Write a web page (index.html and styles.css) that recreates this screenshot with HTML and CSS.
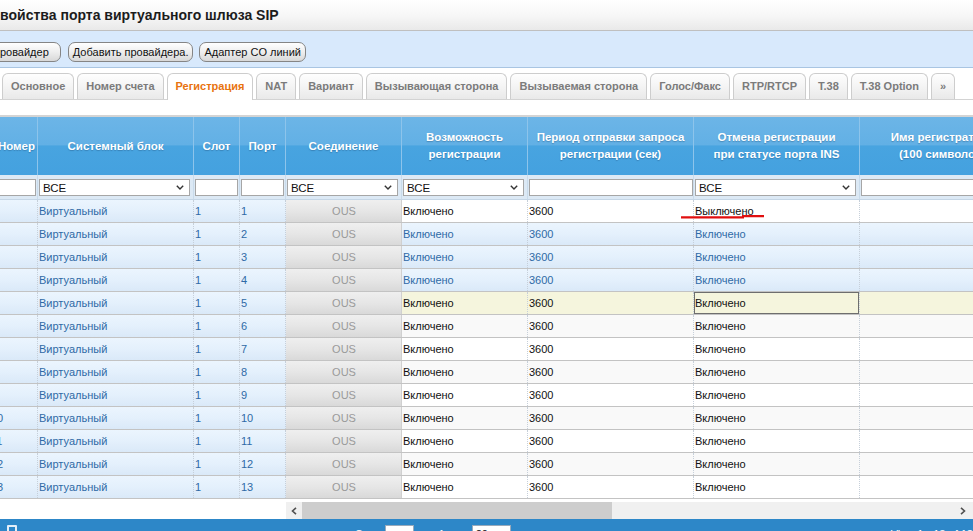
FILE: index.html
```html
<!DOCTYPE html>
<html lang="ru">
<head>
<meta charset="utf-8">
<title>Свойства порта виртуального шлюза SIP</title>
<link rel="stylesheet" href="styles.css">
</head>
<body>
<div class="titlebar"><h1>Свойства порта виртуального шлюза SIP</h1></div>
<div class="toolbar">
  <button class="btn btn-first">Провайдер</button>
  <button class="btn">Добавить провайдера.</button>
  <button class="btn">Адаптер CO линий</button>
</div>
<div class="tabs">
  <div class="tab">Основное</div>
  <div class="tab">Номер счета</div>
  <div class="tab active">Регистрация</div>
  <div class="tab">NAT</div>
  <div class="tab">Вариант</div>
  <div class="tab">Вызывающая сторона</div>
  <div class="tab">Вызываемая сторона</div>
  <div class="tab">Голос/Факс</div>
  <div class="tab">RTP/RTCP</div>
  <div class="tab">T.38</div>
  <div class="tab">T.38 Option</div>
  <div class="tab">»</div>
</div>
<div class="grid">
  <div class="gi">
    <div class="r hr">
      <div class="h0">Номер</div>
      <div>Системный блок</div>
      <div>Слот</div>
      <div>Порт</div>
      <div>Соединение</div>
      <div>Возможность<br>регистрации</div>
      <div>Период отправки запроса<br>регистрации (сек)</div>
      <div>Отмена регистрации<br>при статусе порта INS</div>
      <div>Имя регистратора<br>(100 символов)</div>
    </div>
    <div class="r fr">
      <div class="fc"><div class="inp"></div></div>
      <div class="fc sel-cell"><div class="sel"><span>ВСЕ</span><svg width="8" height="5" viewBox="0 0 8 5"><path d="M0.8 0.8 L4 4 L7.2 0.8" fill="none" stroke="#333" stroke-width="1.4"/></svg></div></div>
      <div class="fc"><div class="inp"></div></div>
      <div class="fc"><div class="inp"></div></div>
      <div class="fc sel-cell"><div class="sel"><span>ВСЕ</span><svg width="8" height="5" viewBox="0 0 8 5"><path d="M0.8 0.8 L4 4 L7.2 0.8" fill="none" stroke="#333" stroke-width="1.4"/></svg></div></div>
      <div class="fc sel-cell"><div class="sel"><span>ВСЕ</span><svg width="8" height="5" viewBox="0 0 8 5"><path d="M0.8 0.8 L4 4 L7.2 0.8" fill="none" stroke="#333" stroke-width="1.4"/></svg></div></div>
      <div class="fc fc-wide"><div class="inp"></div></div>
      <div class="fc sel-cell"><div class="sel"><span>ВСЕ</span><svg width="8" height="5" viewBox="0 0 8 5"><path d="M0.8 0.8 L4 4 L7.2 0.8" fill="none" stroke="#333" stroke-width="1.4"/></svg></div></div>
      <div class="fc"><div class="inp"></div></div>
    </div>

    <div class="r dr w"><div class="c fz n">1</div><div class="c fz">Виртуальный</div><div class="c fz">1</div><div class="c fz">1</div><div class="c cn">OUS</div><div class="c">Включено</div><div class="c">3600</div><div class="c">Выключено</div><div class="c"></div></div>
    <div class="r dr b"><div class="c fz n">2</div><div class="c fz">Виртуальный</div><div class="c fz">1</div><div class="c fz">2</div><div class="c cn">OUS</div><div class="c">Включено</div><div class="c">3600</div><div class="c">Включено</div><div class="c"></div></div>
    <div class="r dr b"><div class="c fz n">3</div><div class="c fz">Виртуальный</div><div class="c fz">1</div><div class="c fz">3</div><div class="c cn">OUS</div><div class="c">Включено</div><div class="c">3600</div><div class="c">Включено</div><div class="c"></div></div>
    <div class="r dr b"><div class="c fz n">4</div><div class="c fz">Виртуальный</div><div class="c fz">1</div><div class="c fz">4</div><div class="c cn">OUS</div><div class="c">Включено</div><div class="c">3600</div><div class="c">Включено</div><div class="c"></div></div>
    <div class="r dr y"><div class="c fz n">5</div><div class="c fz">Виртуальный</div><div class="c fz">1</div><div class="c fz">5</div><div class="c cn">OUS</div><div class="c">Включено</div><div class="c">3600</div><div class="c focus">Включено</div><div class="c"></div></div>
    <div class="r dr g"><div class="c fz n">6</div><div class="c fz">Виртуальный</div><div class="c fz">1</div><div class="c fz">6</div><div class="c cn">OUS</div><div class="c">Включено</div><div class="c">3600</div><div class="c">Включено</div><div class="c"></div></div>
    <div class="r dr w"><div class="c fz n">7</div><div class="c fz">Виртуальный</div><div class="c fz">1</div><div class="c fz">7</div><div class="c cn">OUS</div><div class="c">Включено</div><div class="c">3600</div><div class="c">Включено</div><div class="c"></div></div>
    <div class="r dr g"><div class="c fz n">8</div><div class="c fz">Виртуальный</div><div class="c fz">1</div><div class="c fz">8</div><div class="c cn">OUS</div><div class="c">Включено</div><div class="c">3600</div><div class="c">Включено</div><div class="c"></div></div>
    <div class="r dr w"><div class="c fz n">9</div><div class="c fz">Виртуальный</div><div class="c fz">1</div><div class="c fz">9</div><div class="c cn">OUS</div><div class="c">Включено</div><div class="c">3600</div><div class="c">Включено</div><div class="c"></div></div>
    <div class="r dr g"><div class="c fz n">10</div><div class="c fz">Виртуальный</div><div class="c fz">1</div><div class="c fz">10</div><div class="c cn">OUS</div><div class="c">Включено</div><div class="c">3600</div><div class="c">Включено</div><div class="c"></div></div>
    <div class="r dr w"><div class="c fz n">11</div><div class="c fz">Виртуальный</div><div class="c fz">1</div><div class="c fz">11</div><div class="c cn">OUS</div><div class="c">Включено</div><div class="c">3600</div><div class="c">Включено</div><div class="c"></div></div>
    <div class="r dr g"><div class="c fz n">12</div><div class="c fz">Виртуальный</div><div class="c fz">1</div><div class="c fz">12</div><div class="c cn">OUS</div><div class="c">Включено</div><div class="c">3600</div><div class="c">Включено</div><div class="c"></div></div>
    <div class="r dr w"><div class="c fz n">13</div><div class="c fz">Виртуальный</div><div class="c fz">1</div><div class="c fz">13</div><div class="c cn">OUS</div><div class="c">Включено</div><div class="c">3600</div><div class="c">Включено</div><div class="c"></div></div>
  </div>
  <svg class="mark" width="88" height="6" viewBox="0 0 88 6"><path d="M1 3.3 L64 3.3 M62 2.2 L84 2.2" fill="none" stroke="#e10f0f" stroke-width="2.2"/></svg>
</div>
<div class="hs">
  <div class="hs-blank"></div>
  <div class="hs-track">
    <div class="hs-btn"><svg width="6" height="8" viewBox="0 0 6 8"><path d="M5 0.8 L1.5 4 L5 7.2" fill="none" stroke="#505050" stroke-width="1.6"/></svg></div>
    <div class="hs-thumb"></div>
    <div class="hs-fill"></div>
    <div class="hs-btn hs-right"><svg width="6" height="8" viewBox="0 0 6 8"><path d="M1 0.8 L4.5 4 L1 7.2" fill="none" stroke="#505050" stroke-width="1.6"/></svg></div>
  </div>
</div>
<div class="footer">
  <div class="pg-icon"></div>
  <div class="pg-text pg-page">Стр.</div>
  <div class="pg-input"></div>
  <div class="pg-text pg-of">из 1</div>
  <div class="pg-select">20</div>
  <div class="pg-text pg-view">View 1 - 13 of 13</div>
</div>
</body>
</html>
```

FILE: styles.css
```css
* { box-sizing: border-box; }
html, body { margin: 0; padding: 0; }
body {
  width: 973px;
  height: 531px;
  overflow: hidden;
  background: #fff;
  font-family: "Liberation Sans", Arial, sans-serif;
  color: #111;
}

/* Title */
.titlebar {
  height: 31px;
  border-bottom: 1px solid #bfbfbf;
  background: linear-gradient(#ffffff, #f6f6f6 55%, #e9e9e9);
  overflow: hidden;
}
.titlebar h1 {
  margin: 0 0 0 -10px;
  font-size: 14px;
  font-weight: bold;
  line-height: 31px;
  color: #1c1c1c;
  white-space: nowrap;
}

/* Toolbar */
.toolbar {
  height: 37px;
  padding-top: 11px;
  background: #d8e9fc;
  border-bottom: 1px solid #a9c5e2;
  display: flex;
  align-items: flex-start;
  gap: 6px;
  white-space: nowrap;
}
.btn {
  height: 20px;
  padding: 0 4px;
  border: 1px solid #858585;
  border-radius: 7px;
  background: linear-gradient(#ffffff, #eeeeee 50%, #d8d8d8);
  font-family: "Liberation Sans", Arial, sans-serif;
  font-size: 11px;
  line-height: 18px;
  color: #111;
}
.btn-first {
  margin-left: -13px;
  margin-right: 1px;
  padding-right: 11px;
}

/* Tabs */
.tabs {
  height: 32px;
  padding: 5px 0 0 2px;
  display: flex;
  align-items: flex-start;
  gap: 3px;
  border-bottom: 1px solid #d3d3d3;
  white-space: nowrap;
}
.tab {
  height: 26px;
  padding: 0 8px;
  border: 1px solid #cdcdcd;
  border-bottom: none;
  border-radius: 6px 6px 0 0;
  background: linear-gradient(#fefefe, #f4f4f4 50%, #e9e9e9);
  color: #7b7b7b;
  font-size: 11px;
  font-weight: bold;
  line-height: 25px;
}
.tab.active {
  height: 27px;
  background: #fff;
  color: #e8730f;
}

/* Grid */
.grid {
  position: relative;
  margin-top: 15px;
  border-top: 2px solid #d4d4d4;
  height: 384px;
  overflow: hidden;
}
.gi {
  width: 1040px;
  margin-left: -14px;
}
.r {
  display: grid;
  grid-template-columns: 52px 156px 46px 46px 116px 126px 166px 166px 166px;
}

.hr {
  height: 58px;
  background: linear-gradient(#6cb5e7 0%, #62b0e5 48%, #48a4e0 50%, #44a1df 100%);
  color: #fff;
  font-size: 11.5px;
  font-weight: bold;
}
.hr > div {
  border-right: 1px solid #8dc4eb;
  display: flex;
  align-items: center;
  justify-content: center;
  text-align: center;
  line-height: 17px;
  white-space: nowrap;
  text-shadow: 0 1px 1px rgba(30, 70, 110, 0.35);
}
.hr > .h0 {
  justify-content: flex-end;
  padding-right: 2px;
}

.fr {
  height: 25px;
  background: #dce9f5;
  border-bottom: 1px solid #c5d6e6;
}
.fc {
  border-right: 1px solid #c9dbeb;
  padding: 4px 1px 0 1px;
}
.fc.sel-cell { padding-right: 3px; }
.fc.fc-wide { padding-right: 0; }
.inp, .sel {
  height: 17px;
  border: 1px solid #a6a6a6;
  background: #fff;
}
.sel {
  display: flex;
  align-items: center;
  justify-content: space-between;
  padding: 0 5px 0 3px;
  font-size: 11.5px;
  color: #111;
}

.dr {
  height: 23px;
  border-bottom: 1px solid #c3c3c3;
  font-size: 11px;
  line-height: 22px;
}
.c {
  border-right: 1px dotted #c6cfd9;
  padding-left: 1px;
  white-space: nowrap;
  overflow: hidden;
}
.c.n { padding-left: 5px; }
.fz,
.dr.b .c {
  background: linear-gradient(#ebf5fe 0%, #e4f0fc 50%, #dae9f8 100%);
  color: #2f6aa6;
}
.dr .c.cn {
  background: linear-gradient(#efefef 0%, #e6e6e6 50%, #d9d9d9 100%);
  color: #9a9a9a;
  text-align: center;
  border-right: 1px solid #d0d0d0;
}
.dr.w .c { background-color: #fff; }
.dr.g .c { background-color: #f9f9f9; }
.dr.y .c { background-color: #f5f5dd; }
.dr.w .fz, .dr.g .fz, .dr.y .fz { background-color: transparent; }
.dr .c.focus { box-shadow: inset 0 0 0 1px #6e6e6e; }

.mark {
  position: absolute;
  left: 680px;
  top: 97px;
}

/* Horizontal scrollbar */
.hs {
  margin-top: 3px;
  height: 17px;
  display: flex;
}
.hs-blank { width: 286px; background: #fff; }
.hs-track {
  flex: 1;
  display: flex;
  background: #f0f0f0;
}
.hs-btn {
  width: 16px;
  height: 17px;
  display: flex;
  align-items: center;
  justify-content: center;
}
.hs-right {
  justify-content: flex-start;
  padding-left: 3px;
}
.hs-thumb { width: 310px; height: 17px; background: #cdcdcd; }
.hs-fill { flex: 1; }

/* Footer pager */
.footer {
  height: 40px;
  background: #2d87c8;
  display: flex;
  align-items: flex-start;
  padding-top: 6px;
  color: #fff;
  font-size: 11px;
  white-space: nowrap;
}
.pg-icon {
  margin-left: 7px;
  width: 11px;
  height: 13px;
  border: 2px solid #e3eef8;
  border-radius: 1px;
}
.pg-text { line-height: 18px; }
.pg-page { margin-left: 338px; }
.pg-input {
  margin-left: 8px;
  width: 35px;
  height: 18px;
  background: #fff;
  border: 1px solid #9ab;
}
.pg-of { margin-left: 10px; }
.pg-select {
  margin-left: 27px;
  width: 46px;
  height: 18px;
  background: #fff;
  color: #111;
  border: 1px solid #9ab;
  padding-left: 3px;
  line-height: 16px;
}
.pg-view { margin-left: 380px; }
```
